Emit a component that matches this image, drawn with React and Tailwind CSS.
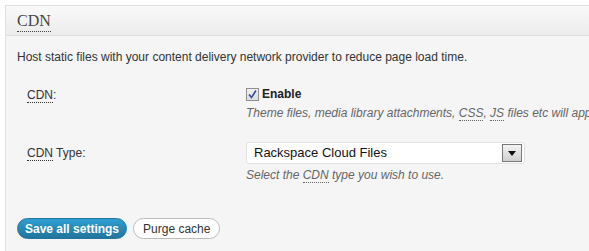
export default function App() {
  const sans = { fontFamily: '"Liberation Sans", Arial, sans-serif' };
  return (
    <div className="w-[589px] h-[251px] bg-white pt-[5px] pl-[5px] overflow-hidden" style={sans}>
      <div className="h-[246px] border-l border-t border-[#dfdfdf] bg-[#f5f5f5] flex flex-col">
        <div className="h-[30px] shrink-0 bg-gradient-to-b from-[#f9f9f9] to-[#ececec] border-b border-[#dfdfdf] pl-[11px] flex items-center">
          <span
            className="text-[16px] leading-none text-[#464646] border-b border-dotted border-[#444] pb-[2px] mt-[3px]"
            style={{ fontFamily: '"Liberation Serif", Georgia, serif' }}
          >
            CDN
          </span>
        </div>
        <p className="pl-[11px] mt-[14px] text-[12px] leading-[15px] text-[#333] whitespace-nowrap">
          Host static files with your content delivery network provider to reduce page load time.
        </p>
        <div className="flex mt-[22px] whitespace-nowrap">
          <div className="w-[240px] shrink-0 pl-[21px] pt-[1px] text-[12px] leading-[15px] text-[#333]">
            <span className="border-b border-dotted border-[#333]">CDN</span>:
          </div>
          <div className="flex flex-col">
            <label className="flex items-center gap-[3px] text-[12px] leading-[15px] text-[#222] font-bold">
              <span className="w-[13px] h-[13px] border border-[#8f8f8f] bg-gradient-to-b from-[#f1f1f1] to-[#dcdcdc] flex items-center justify-center">
                <svg width="9" height="9" viewBox="0 0 9 9">
                  <path d="M1 4.5 L3.5 7.5 L8 0.5" stroke="#3a4a9a" strokeWidth="1.6" fill="none" />
                </svg>
              </span>
              Enable
            </label>
            <div className="mt-[4px] text-[12px] leading-[15px] italic text-[#666]">
              Theme files, media library attachments, <span className="border-b border-dotted border-[#666]">CSS</span>, <span className="border-b border-dotted border-[#666]">JS</span> files etc will appear on the CDN.
            </div>
          </div>
        </div>
        <div className="flex mt-[21px] whitespace-nowrap">
          <div className="w-[240px] shrink-0 pl-[21px] pt-[4px] text-[12px] leading-[15px] text-[#333]">
            <span className="border-b border-dotted border-[#333]">CDN</span> Type:
          </div>
          <div className="flex flex-col">
            <div className="w-[279px] h-[22px] bg-white border border-[#e2e2e2] rounded-[3px] flex items-center justify-between pl-[7px] pr-[2px]">
              <span className="text-[13px] text-[#111]">Rackspace Cloud Files</span>
              <span className="w-[20px] h-[18px] border border-[#777] bg-gradient-to-b from-[#f4f4f4] to-[#cfcfcf] flex items-center justify-center">
                <svg width="8" height="5" viewBox="0 0 8 5">
                  <path d="M0 0 H8 L4 5 Z" fill="#111" />
                </svg>
              </span>
            </div>
            <div className="mt-[4px] text-[12px] leading-[15px] italic text-[#666]">
              Select the <span className="border-b border-dotted border-[#666]">CDN</span> type you wish to use.
            </div>
          </div>
        </div>
        <div className="flex gap-[6px] pl-[11px] mt-[35px]">
          <button className="h-[21px] px-[7px] rounded-full bg-gradient-to-b from-[#2e9fd2] to-[#21759b] border border-[#21759b] text-white text-[12px] font-bold leading-none">
            Save all settings
          </button>
          <button className="h-[21px] px-[9px] rounded-full bg-white border border-[#bbb] text-[#333] text-[12px] leading-none">
            Purge cache
          </button>
        </div>
      </div>
    </div>
  );
}
